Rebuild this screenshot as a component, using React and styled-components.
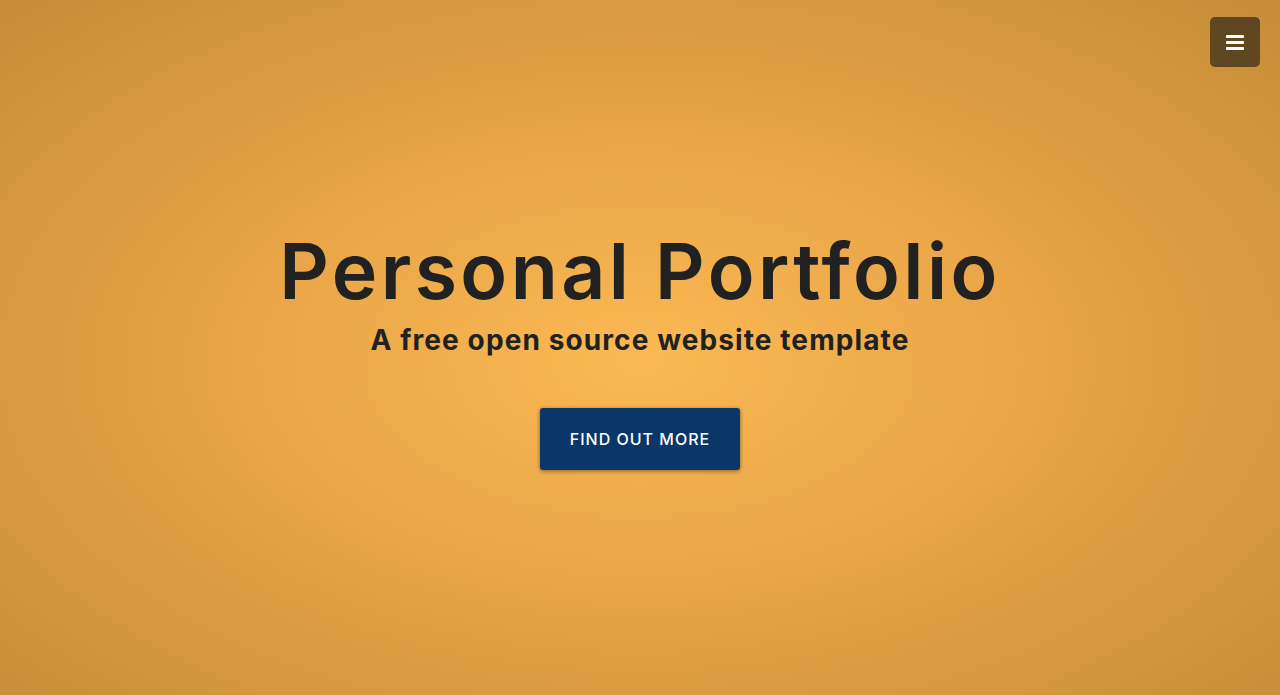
import React from "react";
import styled, { createGlobalStyle } from "styled-components";

const GlobalStyle = createGlobalStyle`
  html, body {
    margin: 0;
    padding: 0;
  }
  body {
    font-family: Inter, "Open Sans", "Liberation Sans", sans-serif;
  }
`;

const Masthead = styled.header`
  position: relative;
  height: 695px;
  width: 100%;
  display: flex;
  flex-direction: column;
  align-items: center;
  justify-content: center;
  background: radial-gradient(ellipse at 50% 52%, #fbb954 0%, #e8a446 45%, #c68c38 100%);
  color: #212121;
  text-align: center;
  box-sizing: border-box;
  padding-top: 8px;
`;

const Title = styled.h1`
  margin: 0 0 14px;
  font-size: 77px;
  font-weight: 600;
  line-height: 1;
  letter-spacing: 3.4px;
`;

const Subtitle = styled.h3`
  margin: 0 0 50px;
  font-size: 28px;
  font-weight: 700;
  line-height: 1.2;
  letter-spacing: 1.1px;
`;

const Button = styled.a`
  display: inline-flex;
  align-items: center;
  justify-content: center;
  width: 200px;
  height: 62px;
  box-sizing: border-box;
  background: #0a3668;
  color: #fff;
  font-size: 16px;
  font-weight: 500;
  letter-spacing: 1px;
  text-transform: uppercase;
  border-radius: 3px;
  box-shadow: 0 1px 4px rgba(0, 0, 0, 0.45);
  text-decoration: none;
  cursor: pointer;
`;

const MenuToggle = styled.button`
  position: absolute;
  top: 17px;
  right: 20px;
  width: 50px;
  height: 50px;
  border: none;
  border-radius: 5px;
  background: #5f4721;
  display: flex;
  flex-direction: column;
  align-items: center;
  justify-content: center;
  gap: 3px;
  cursor: pointer;
`;

const Bar = styled.span`
  display: block;
  width: 18px;
  height: 3px;
  background: #fff;
  border-radius: 1px;
`;

export default function App() {
  return (
    <>
      <GlobalStyle />
      <Masthead>
        <MenuToggle aria-label="menu">
          <Bar />
          <Bar />
          <Bar />
        </MenuToggle>
        <Title>Personal Portfolio</Title>
        <Subtitle>A free open source website template</Subtitle>
        <Button>Find Out More</Button>
      </Masthead>
    </>
  );
}
